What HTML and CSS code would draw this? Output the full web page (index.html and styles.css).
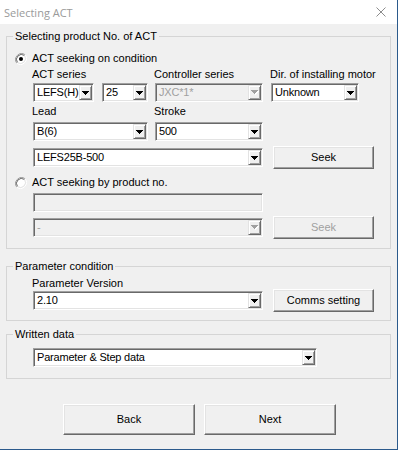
FILE: index.html
```html
<!DOCTYPE html>
<html>
<head>
<meta charset="utf-8">
<title>Selecting ACT</title>
<link rel="stylesheet" href="styles.css">
</head>
<body>
<div class="window">
  <div class="titlebar">
    <span class="title">Selecting ACT</span>
    <svg class="close" width="10" height="10" viewBox="0 0 10 10"><path d="M0.5 0.5L9.5 9.5M9.5 0.5L0.5 9.5" stroke="#8c8c8c" stroke-width="1" fill="none"/></svg>
  </div>
  <div class="client">
    <div class="group g1">
      <div class="legend">Selecting product No. of ACT</div>
      <div class="radio-row r1">
        <svg class="radio" width="12" height="12" viewBox="0 0 12 12"><circle cx="6" cy="6" r="5" fill="#fff"/><path d="M10.2 1.8A6 6 0 0 0 1.8 10.2" stroke="#a0a0a0" fill="none"/><path d="M9.5 2.5A5 5 0 0 0 2.5 9.5" stroke="#696969" fill="none"/><path d="M10.2 1.8A6 6 0 0 1 1.8 10.2" stroke="#fff" fill="none"/><path d="M9.5 2.5A5 5 0 0 1 2.5 9.5" stroke="#e3e3e3" fill="none"/><circle cx="6" cy="6" r="2" fill="#000"/></svg>
        <span>ACT seeking on condition</span>
      </div>
      <div class="cond">
        <div class="labels l1"><span class="lc1">ACT series</span><span class="lc2">Controller series</span><span>Dir. of installing motor</span></div>
        <div class="row row1">
          <div class="combo w-series"><span class="val">LEFS(H)</span><span class="arrow"><svg width="7" height="4" viewBox="0 0 7 4"><path d="M0 0h7v1H0zM1 1h5v1H1zM2 2h3v1H2zM3 3h1v1H3z"/></svg></span></div>
          <div class="combo w-size gap8"><span class="val">25</span><span class="arrow"><svg width="7" height="4" viewBox="0 0 7 4"><path d="M0 0h7v1H0zM1 1h5v1H1zM2 2h3v1H2zM3 3h1v1H3z"/></svg></span></div>
          <div class="combo w-ctrl gap7 disabled"><span class="val">JXC*1*</span><span class="arrow"><svg width="8" height="5" viewBox="0 0 8 5"><path fill="#fff" d="M1 1h7v1H1zM2 2h5v1H2zM3 3h3v1H3zM4 4h1v1H4z"/><path fill="#a0a0a0" d="M0 0h7v1H0zM1 1h5v1H1zM2 2h3v1H2zM3 3h1v1H3z"/></svg></span></div>
          <div class="combo w-dir gap8"><span class="val">Unknown</span><span class="arrow"><svg width="7" height="4" viewBox="0 0 7 4"><path d="M0 0h7v1H0zM1 1h5v1H1zM2 2h3v1H2zM3 3h1v1H3z"/></svg></span></div>
        </div>
        <div class="labels l2"><span class="lc1">Lead</span><span class="lc2">Stroke</span></div>
        <div class="row row2">
          <div class="combo w-lead"><span class="val">B(6)</span><span class="arrow"><svg width="7" height="4" viewBox="0 0 7 4"><path d="M0 0h7v1H0zM1 1h5v1H1zM2 2h3v1H2zM3 3h1v1H3z"/></svg></span></div>
          <div class="combo w-ctrl gap7"><span class="val">500</span><span class="arrow"><svg width="7" height="4" viewBox="0 0 7 4"><path d="M0 0h7v1H0zM1 1h5v1H1zM2 2h3v1H2zM3 3h1v1H3z"/></svg></span></div>
        </div>
        <div class="row row3 btnrow">
          <div class="combo w-wide"><span class="val">LEFS25B-500</span><span class="arrow"><svg width="7" height="4" viewBox="0 0 7 4"><path d="M0 0h7v1H0zM1 1h5v1H1zM2 2h3v1H2zM3 3h1v1H3z"/></svg></span></div>
          <button class="btn seek">Seek</button>
        </div>
      </div>
      <div class="radio-row r2">
        <svg class="radio" width="12" height="12" viewBox="0 0 12 12"><circle cx="6" cy="6" r="5" fill="#fff"/><path d="M10.2 1.8A6 6 0 0 0 1.8 10.2" stroke="#a0a0a0" fill="none"/><path d="M9.5 2.5A5 5 0 0 0 2.5 9.5" stroke="#696969" fill="none"/><path d="M10.2 1.8A6 6 0 0 1 1.8 10.2" stroke="#fff" fill="none"/><path d="M9.5 2.5A5 5 0 0 1 2.5 9.5" stroke="#e3e3e3" fill="none"/></svg>
        <span>ACT seeking by product no.</span>
      </div>
      <div class="cond cond2">
        <div class="textbox w-wide disabled"></div>
        <div class="row row5 btnrow">
          <div class="combo w-wide disabled"><span class="val">-</span><span class="arrow"><svg width="8" height="5" viewBox="0 0 8 5"><path fill="#fff" d="M1 1h7v1H1zM2 2h5v1H2zM3 3h3v1H3zM4 4h1v1H4z"/><path fill="#a0a0a0" d="M0 0h7v1H0zM1 1h5v1H1zM2 2h3v1H2zM3 3h1v1H3z"/></svg></span></div>
          <button class="btn seek" disabled>Seek</button>
        </div>
      </div>
    </div>

    <div class="group g2">
      <div class="legend">Parameter condition</div>
      <div class="cond">
        <div class="labels l3">Parameter Version</div>
        <div class="row row6 btnrow">
          <div class="combo w-wide"><span class="val">2.10</span><span class="arrow"><svg width="7" height="4" viewBox="0 0 7 4"><path d="M0 0h7v1H0zM1 1h5v1H1zM2 2h3v1H2zM3 3h1v1H3z"/></svg></span></div>
          <button class="btn seek">Comms setting</button>
        </div>
      </div>
    </div>

    <div class="group g3">
      <div class="legend">Written data</div>
      <div class="cond">
        <div class="combo w-data row7"><span class="val">Parameter &amp; Step data</span><span class="arrow"><svg width="7" height="4" viewBox="0 0 7 4"><path d="M0 0h7v1H0zM1 1h5v1H1zM2 2h3v1H2zM3 3h1v1H3z"/></svg></span></div>
      </div>
    </div>

    <div class="footer">
      <button class="btn big">Back</button>
      <button class="btn big">Next</button>
    </div>
  </div>
</div>
</body>
</html>
```

FILE: styles.css
```css
* { box-sizing: border-box; }
html, body { margin: 0; padding: 0; background: #fff; }
body {
  width: 400px;
  height: 451px;
  overflow: hidden;
  font-family: "Liberation Sans", Arial, sans-serif;
  font-size: 11px;
  line-height: 13px;
  color: #000;
}
.window {
  width: 398px;
  height: 450px;
  background: #f0f0f0;
  border-right: 1px solid #2b5a8c;
  border-bottom: 1px solid #2b5a8c;
  display: flex;
  flex-direction: column;
}
.titlebar {
  flex: none;
  height: 24px;
  background: #fff;
  display: flex;
  align-items: center;
  justify-content: space-between;
  padding: 0 11px 0 4px;
}
.title {
  font-family: "Open Sans", "Noto Sans", sans-serif;
  font-size: 11px;
  color: #9a9a9a;
}
.close { display: block; }
.client { flex: 1; display: flex; flex-direction: column; align-items: flex-start; }

/* group boxes */
.group {
  flex: none;
  margin-left: 6px;
  width: 385px;
  border: 1px solid #d5d5d5;
  padding: 0 0 0 8px;
}
.legend {
  display: table;
  margin: -7px 0 0 -2px;
  padding: 0 2px;
  background: #f0f0f0;
  line-height: 13px;
  white-space: nowrap;
}
.g1 { margin-top: 12px; padding-bottom: 9px; }
.g2 { margin-top: 17px; padding-bottom: 8px; }
.g3 { margin-top: 13px; padding-bottom: 11px; }

.radio-row {
  display: flex;
  align-items: center;
  gap: 5px;
  height: 13px;
}
.radio { display: block; flex: none; }
.r1 { margin-top: 9px; }
.r2 { margin-top: 7px; }

.cond { margin-left: 18px; }
.cond2 { padding-top: 4px; }
.labels { display: flex; height: 13px; margin-left: -1px; white-space: nowrap; }
.lc1 { width: 122px; }
.lc2 { width: 116px; }
.l1 { margin-top: 3px; }
.l2 { margin-top: 3px; }
.l3 { margin-top: 4px; }

.row { display: flex; align-items: center; }
.row1 { margin-top: 2px; }
.row2 { margin-top: 4px; }
.row3 { margin-top: 5px; }
.btnrow { height: 23px; }
.row5 { margin-top: 4px; }
.row6 { margin-top: -1px; }
.row7 { margin-top: 7px; }

.gap7 { margin-left: 7px; }
.gap8 { margin-left: 8px; }

.combo, .textbox {
  height: 19px;
  display: flex;
  background: #fff;
  border: 1px solid;
  border-color: #a0a0a0 #fff #fff #a0a0a0;
  box-shadow: inset 1px 1px #696969, inset -1px -1px #e3e3e3;
  padding: 1px;
  flex: none;
}
.combo .val {
  flex: 1;
  padding-left: 2px;
  line-height: 15px;
  letter-spacing: -0.2px;
  white-space: nowrap;
  overflow: hidden;
}
.combo .arrow {
  width: 13px;
  flex: none;
  display: flex;
  align-items: center;
  justify-content: center;
  background: #f0f0f0;
  border: 1px solid;
  border-color: #e3e3e3 #696969 #696969 #e3e3e3;
  box-shadow: inset 1px 1px #fff, inset -1px -1px #a0a0a0;
}
.combo .arrow svg { display: block; }
.combo.disabled, .textbox.disabled { background: #f0f0f0; }
.combo.disabled .val { color: #a0a0a0; }

.w-series { width: 61px; }
.w-size { width: 46px; }
.w-ctrl { width: 108px; }
.w-dir { width: 88px; }
.w-lead { width: 115px; }
.w-wide { width: 230px; }
.w-data { width: 284px; }

.btn {
  font-family: "Liberation Sans", Arial, sans-serif;
  font-size: 11px;
  line-height: 13px;
  color: #000;
  background: #f0f0f0;
  border: 1px solid;
  border-color: #fff #696969 #696969 #fff;
  box-shadow: inset -1px -1px #a0a0a0, inset 1px 1px #e3e3e3;
  padding: 0;
  margin: 0;
  border-radius: 0;
}
.btn:disabled { color: #a0a0a0; }
.seek { width: 101px; height: 23px; margin-left: 10px; }
.footer {
  display: flex;
  gap: 9px;
  margin: 25px 0 0 63px;
}
.big { width: 132px; height: 31px; }
```
